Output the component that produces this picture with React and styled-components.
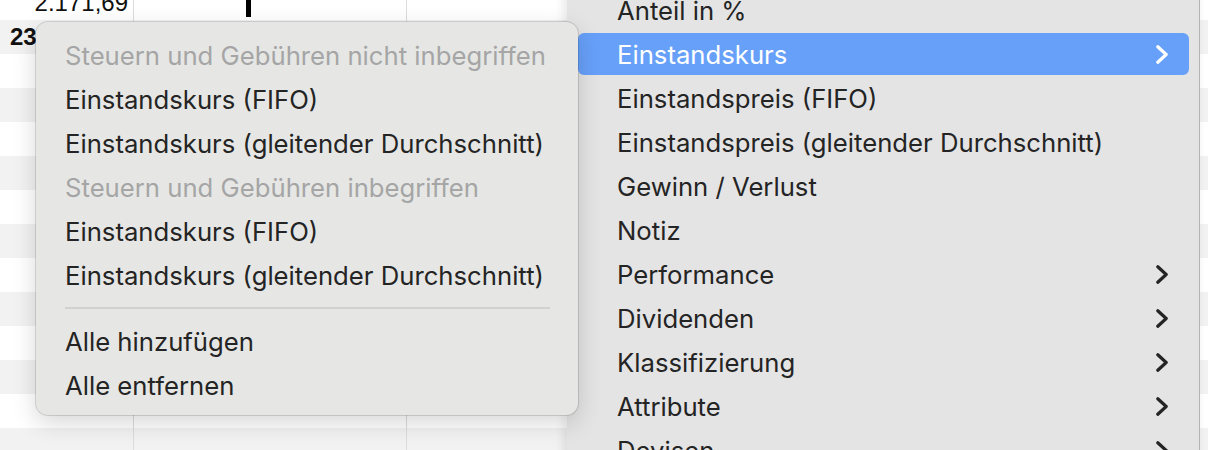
import React from "react";
import styled, { createGlobalStyle } from "styled-components";

const Global = createGlobalStyle`
  html, body { margin: 0; padding: 0; background: #ffffff; overflow: hidden; }
  #root { width: 1208px; height: 450px; }
`;

const Stage = styled.div`
  position: relative;
  width: 1208px;
  height: 450px;
  overflow: hidden;
  font-family: Inter, "Noto Sans", sans-serif;
`;

const Table = styled.div`
  display: flex;
  flex-direction: column;
  margin-top: -14px;
`;

const Row = styled.div`
  display: grid;
  grid-template-columns: 134px 273px 1fr;
  height: 34px;
  background: ${(p) => (p.$striped ? "#f2f2f2" : "#ffffff")};
  font-family: "Liberation Sans", Arial, sans-serif;
  font-size: 24px;
  color: #111;
`;

const Cell = styled.div`
  display: flex;
  align-items: center;
  justify-content: ${(p) => (p.$align === "right" ? "flex-end" : "flex-start")};
  padding: 0 ${(p) => (p.$align === "right" ? "5px" : "10px")};
  border-right: ${(p) => (p.$last ? "none" : "1px solid #dcdcdc")};
  font-weight: ${(p) => (p.$bold ? 700 : 400)};
  position: relative;
`;

const Bar = styled.span`
  position: absolute;
  left: 112px;
  top: 14px;
  width: 5px;
  height: 17px;
  background: #000;
`;

const MainMenu = styled.div`
  position: absolute;
  left: 567px;
  top: -11px;
  width: 633px;
  height: 480px;
  box-sizing: border-box;
  padding: 0 10px 0 11px;
  background: #e4e4e4;
  border-right: 1px solid #b4b4b4;
  box-shadow: -3px 0 10px rgba(0, 0, 0, 0.1);
  display: flex;
  flex-direction: column;
`;

const SubMenu = styled.div`
  position: absolute;
  left: 36px;
  top: 22px;
  width: 542px;
  height: 393px;
  box-sizing: border-box;
  padding: 12px 11px 7px;
  background: #e6e7e5;
  border-radius: 12px;
  box-shadow: 0 0 0 1px rgba(0, 0, 0, 0.13), 0 8px 24px rgba(0, 0, 0, 0.16);
  display: flex;
  flex-direction: column;
`;

const Item = styled.div`
  flex: none;
  height: 42px;
  margin-bottom: 2px;
  box-sizing: border-box;
  padding: 0 21px 0 ${(p) => p.$indent}px;
  border-radius: 6px;
  display: flex;
  align-items: center;
  justify-content: space-between;
  font-size: 25.7px;
  white-space: nowrap;
  background: ${(p) => (p.$active ? "#67a0f9" : "transparent")};
  color: ${(p) => (p.$active ? "#ffffff" : p.$disabled ? "#a5a5a5" : "#242424")};
`;

const Separator = styled.div`
  height: 2px;
  margin: 9px 17px 11px 18px;
  background: #d1d2d0;
`;

const Chevron = ({ color }) => (
  <svg width="12" height="19" viewBox="0 0 12 19" aria-hidden="true">
    <polyline
      points="1.8,1.8 10.2,9.5 1.8,17.2"
      fill="none"
      stroke={color}
      strokeWidth="3.2"
      strokeLinecap="round"
      strokeLinejoin="round"
    />
  </svg>
);

const mainItems = [
  { label: "Anteil in %" },
  { label: "Einstandskurs", sub: true, active: true },
  { label: "Einstandspreis (FIFO)" },
  { label: "Einstandspreis (gleitender Durchschnitt)" },
  { label: "Gewinn / Verlust" },
  { label: "Notiz" },
  { label: "Performance", sub: true },
  { label: "Dividenden", sub: true },
  { label: "Klassifizierung", sub: true },
  { label: "Attribute", sub: true },
  { label: "Devisen", sub: true },
];

const subItems = [
  { label: "Steuern und Gebühren nicht inbegriffen", disabled: true },
  { label: "Einstandskurs (FIFO)" },
  { label: "Einstandskurs (gleitender Durchschnitt)" },
  { label: "Steuern und Gebühren inbegriffen", disabled: true },
  { label: "Einstandskurs (FIFO)" },
  { label: "Einstandskurs (gleitender Durchschnitt)" },
  { sep: true },
  { label: "Alle hinzufügen" },
  { label: "Alle entfernen" },
];

export default function App() {
  const rows = Array.from({ length: 15 }, (_, i) => i);
  return (
    <>
      <Global />
      <Stage>
        <Table>
          {rows.map((i) => (
            <Row key={i} $striped={i % 2 === 1}>
              <Cell $align={i === 0 ? "right" : "left"} $bold={i === 1}>
                {i === 0 ? "2.171,69" : i === 1 ? "23" : ""}
              </Cell>
              <Cell>{i === 0 && <Bar />}</Cell>
              <Cell $last />
            </Row>
          ))}
        </Table>

        <MainMenu>
          {mainItems.map((it) => (
            <Item key={it.label} $indent={39} $active={it.active}>
              <span>{it.label}</span>
              {it.sub && <Chevron color={it.active ? "#ffffff" : "#242424"} />}
            </Item>
          ))}
        </MainMenu>

        <SubMenu>
          {subItems.map((it, i) =>
            it.sep ? (
              <Separator key={i} />
            ) : (
              <Item key={i} $indent={18} $disabled={it.disabled}>
                <span>{it.label}</span>
              </Item>
            )
          )}
        </SubMenu>
      </Stage>
    </>
  );
}
